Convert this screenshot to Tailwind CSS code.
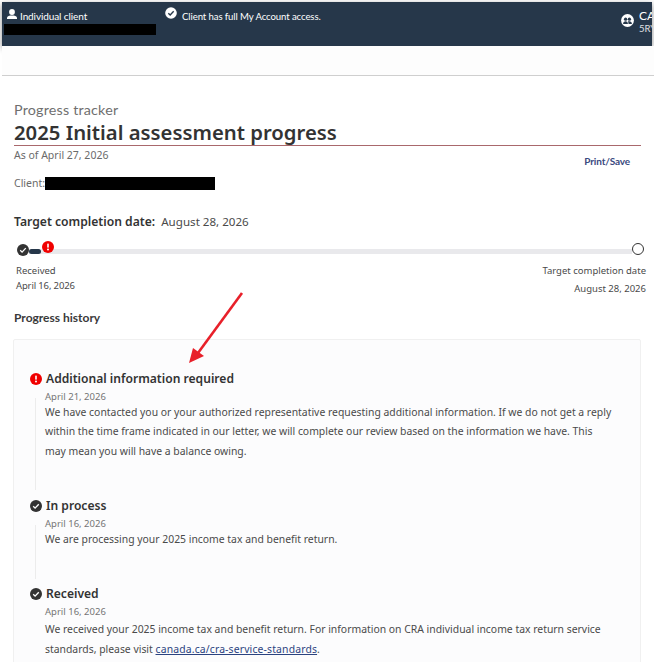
<!DOCTYPE html>
<html lang="en">
<head>
    <meta charset="UTF-8">
    <meta name="viewport" content="width=device-width, initial-scale=1.0">
    <title>Progress tracker</title>
    <script src="https://cdn.jsdelivr.net/npm/@tailwindcss/browser@4"></script>
</head>
<body class="bg-white h-[662px] overflow-hidden relative font-['Noto_Sans',sans-serif] text-[#3a3a3a]">
    <!-- account bar -->
    <header class="mx-[2px] mt-[2px] h-[44px] bg-[#26374a] text-white font-['Lato',sans-serif] flex shadow-[0_2px_6px_rgba(0,0,0,0.45)] overflow-hidden">
        <div class="w-[163px] shrink-0 pt-[6px] pl-[2px]">
            <div class="flex items-center gap-[3px] h-[14px] pl-[3px]">
                <svg class="w-[10px] h-[10px] -mt-[2px]" viewBox="0 0 10 10" fill="#fff"><circle cx="5" cy="3" r="2.900"/><path d="M0 10V8.800C0 7.200 2.500 6.600 5 6.600s5 .6 5 2.200V10z"/></svg>
                <span class="text-[10px] mt-[2px] tracking-[-0.1px]">Individual client</span>
            </div>
            <div class="bg-black h-[11px] w-[152px] mt-[2px]"></div>
        </div>
        <div class="pt-[5px] flex gap-[5px] items-start">
            <svg class="w-[12px] h-[12px]" viewBox="0 0 13 13"><circle cx="6.500" cy="6.500" r="6.300" fill="#fff"/><path d="M3.600 6.700l2 2 3.800-4" fill="none" stroke="#26374a" stroke-width="1.500"/></svg>
            <span class="text-[9.600px] mt-[3px] tracking-[-0.1px] leading-[14px]">Client has full My Account access.</span>
        </div>
        <div class="ml-auto w-[31px] shrink-0 pt-[8px] flex gap-[5px] overflow-hidden">
            <svg class="w-[13px] h-[13px] shrink-0 mt-[4px]" viewBox="0 0 15 15"><circle cx="7.500" cy="7.500" r="7.400" fill="#fff"/><circle cx="5.300" cy="6" r="1.900" fill="#26374a"/><circle cx="9.700" cy="6" r="1.900" fill="#26374a"/><path d="M2.400 11.500c0-2.300 1.400-3.200 2.900-3.200S8 9.200 8 11.500zM8.700 11.500c0-1.100-.2-2.100-.9-2.800.5-.3 1.200-.4 1.900-.4 1.500 0 2.900.9 2.900 3.200z" fill="#26374a"/></svg>
            <div class="whitespace-nowrap leading-[13px] -mt-[1px]">
                <div class="text-[12px]">CA</div>
                <div class="text-[9.500px] text-white/85">5RY</div>
            </div>
        </div>
    </header>

    <div class="ml-[2px] h-[30px] bg-[#fdfdfd] border-b border-[#cfcfcf]"></div>

    <main class="px-[14px]">
        <p class="mt-[25px] text-[14.300px] leading-[17px] text-[#6f6f6f] font-['Lato',sans-serif] tracking-[0.2px]">Progress tracker</p>
        <h1 class="text-[20.300px] leading-[25px] pt-[2px] font-semibold text-[#333] border-b border-[#a9686c] mr-[-1px]">2025 Initial assessment progress</h1>

        <div class="flex justify-between mt-[2px] h-[14px]">
            <p class="text-[10.500px] leading-[14px] text-[#6a6a6a]">As of April 27, 2026</p>
            <a class="text-[10px] font-['Lato',sans-serif] font-bold leading-[14px] mt-[6px] mr-[10px] tracking-[-0.15px] text-[#3a4a80]">Print/Save</a>
        </div>

        <div class="flex items-center mt-[14px] h-[14px]">
            <span class="text-[10.500px] text-[#6a6a6a] mt-[2px]">Client:</span>
            <span class="bg-black w-[170px] h-[13px]"></span>
        </div>

        <p class="mt-[22px] leading-[17px]"><span class="text-[12.150px] font-semibold text-[#333]">Target completion date:</span><span class="text-[11.600px] text-[#4a4a4a] ml-[6px]">August 28, 2026</span></p>

        <!-- tracker -->
        <div class="relative h-[14px] mt-[11px]">
            <div class="absolute left-[15px] right-[8px] top-[8px] h-[5px] bg-[#e9e9ec]"></div>
            <div class="absolute left-[15px] top-[8px] w-[12px] h-[5px] rounded-full bg-[#26374a]"></div>
            <svg class="absolute left-[3px] top-[3px] w-[12px] h-[12px]" viewBox="0 0 13 13"><circle cx="6.500" cy="6.500" r="6.500" fill="#333"/><path d="M3.500 6.800l2 2 4-4.300" fill="none" stroke="#fff" stroke-width="1.400"/></svg>
            <svg class="absolute left-[28px] top-0 w-[12px] h-[12px]" viewBox="0 0 12 12"><circle cx="6" cy="6" r="6" fill="#f00000"/><rect x="5.200" y="2.500" width="1.600" height="4.200" rx=".6" fill="#fff"/><circle cx="6" cy="8.600" r="1" fill="#fff"/></svg>
            <span class="absolute right-[-4px] top-[2px] w-[12px] h-[12px] rounded-full border-[1.500px] border-[#333] bg-white"></span>
        </div>

        <div class="flex justify-between mt-[8px] mr-[-6px] text-[9.500px] leading-[15px] text-[#4a4a4a]">
            <div class="pl-[2px]">
                <p>Received</p>
                <p class="tracking-[-0.15px]">April 16, 2026</p>
            </div>
            <div class="text-right">
                <p>Target completion date</p>
                <p class="mt-[3px]">August 28, 2026</p>
            </div>
        </div>

        <h2 class="mt-[14px] font-['Lato',sans-serif] font-bold text-[12px] leading-[15px] text-[#3a3a3a]">Progress history</h2>

        <!-- history card -->
        <section class="mt-[14px] mx-[-1px] h-[340px] bg-[#fcfcfd] border border-[#f0f0f0] rounded-[2px] pl-[16px] pr-[27px] pt-[31px]">
            <article class="h-[123px]">
                <div class="flex items-center gap-[4px] h-[16px]">
                    <svg class="w-[12px] h-[12px] shrink-0" viewBox="0 0 12 12"><circle cx="6" cy="6" r="6" fill="#f00000"/><rect x="5.200" y="2.500" width="1.600" height="4.200" rx=".6" fill="#fff"/><circle cx="6" cy="8.600" r="1" fill="#fff"/></svg>
                    <h3 class="text-[12.100px] font-semibold text-[#333]">Additional information required</h3>
                </div>
                <div class="ml-[5px] mt-[3px] flex">
                    <div class="w-px h-[92px] mt-[8px] bg-[#ececec] shrink-0"></div>
                    <div class="pl-[9px]">
                        <p class="text-[9.500px] leading-[14px] text-[#757575]">April 21, 2026</p>
                        <p class="text-[10.400px] leading-[19.600px] text-[#4a4a4a] -mt-[1.500px]">We have contacted you or your authorized representative requesting additional information. If we do not get a reply within the time frame indicated in our letter, we will complete our review based on the information we have. This may mean you will have a balance owing.</p>
                    </div>
                </div>
            </article>
            <article class="h-[88px] mt-[4px]">
                <div class="flex items-center gap-[4px] h-[16px]">
                    <svg class="w-[12px] h-[12px] shrink-0" viewBox="0 0 13 13"><circle cx="6.500" cy="6.500" r="6.500" fill="#333"/><path d="M3.500 6.800l2 2 4-4.300" fill="none" stroke="#fff" stroke-width="1.500"/></svg>
                    <h3 class="text-[12.100px] font-semibold text-[#333]">In process</h3>
                </div>
                <div class="ml-[5px] mt-[3px] flex">
                    <div class="w-px h-[54px] mt-[8px] bg-[#ececec] shrink-0"></div>
                    <div class="pl-[9px]">
                        <p class="text-[9.500px] leading-[14px] text-[#757575]">April 16, 2026</p>
                        <p class="text-[10.400px] leading-[19.600px] text-[#4a4a4a] -mt-[1px]">We are processing your 2025 income tax and benefit return.</p>
                    </div>
                </div>
            </article>
            <article>
                <div class="flex items-center gap-[4px] h-[16px]">
                    <svg class="w-[12px] h-[12px] shrink-0" viewBox="0 0 13 13"><circle cx="6.500" cy="6.500" r="6.500" fill="#333"/><path d="M3.500 6.800l2 2 4-4.300" fill="none" stroke="#fff" stroke-width="1.500"/></svg>
                    <h3 class="text-[12.100px] font-semibold text-[#333]">Received</h3>
                </div>
                <div class="ml-[5px] mt-[3px] pl-[10px]">
                    <p class="text-[9.500px] leading-[14px] text-[#757575]">April 16, 2026</p>
                    <p class="text-[10.400px] leading-[20px] text-[#4a4a4a] -mt-[0.500px]">We received your 2025 income tax and benefit return. For information on CRA individual income tax return service standards, please visit <a class="underline text-[#2b4380] tracking-[0.15px]">canada.ca/cra-service-standards</a>.</p>
                </div>
            </article>
        </section>
    </main>

    <!-- annotation arrow over the card -->
    <svg class="absolute left-[180px] top-[288px] w-[70px] h-[80px]" viewBox="0 0 70 80">
        <path d="M62 5L18 65" stroke="#e8202a" stroke-width="2.600" fill="none"/>
        <path d="M9 75L13 60L24 68z" fill="#e8202a"/>
    </svg>
</body>
</html>
